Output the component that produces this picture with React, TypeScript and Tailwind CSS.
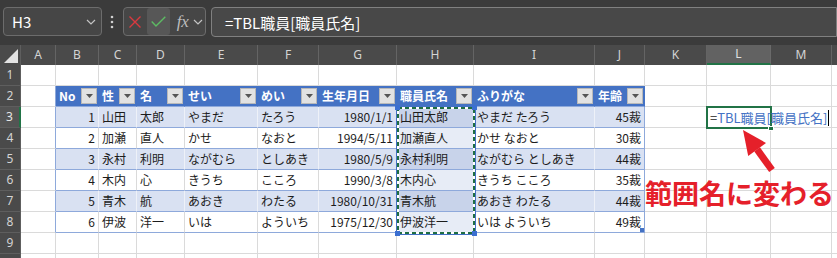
import React from "react";

const COLS = ["A", "B", "C", "D", "E", "F", "G", "H", "I", "J", "K", "L", "M", ""];
const HEAD = ["No", "性", "名", "せい", "めい", "生年月日", "職員氏名", "ふりがな", "年齢"];
const DATA = [
  ["1", "山田", "太郎", "やまだ", "たろう", "1980/1/1", "山田太郎", "やまだ たろう", "45裁"],
  ["2", "加瀬", "直人", "かせ", "なおと", "1994/5/11", "加瀬直人", "かせ なおと", "30裁"],
  ["3", "永村", "利明", "ながむら", "としあき", "1980/5/9", "永村利明", "ながむら としあき", "44裁"],
  ["4", "木内", "心", "きうち", "こころ", "1990/3/8", "木内心", "きうち こころ", "35裁"],
  ["5", "青木", "航", "あおき", "わたる", "1980/10/31", "青木航", "あおき わたる", "44裁"],
  ["6", "伊波", "洋一", "いは", "よういち", "1975/12/30", "伊波洋一", "いは よういち", "49裁"],
];
const RIGHT = [true, false, false, false, false, true, false, false, true];
const ROWS = [1, 2, 3, 4, 5, 6, 7, 8, 9, 10];

const Chevron = () => (
  <svg width="10" height="6" viewBox="0 0 10 6">
    <path d="M1 1l4 4 4-4" fill="none" stroke="#c4c4c4" strokeWidth="1.2" />
  </svg>
);

const FilterBtn = () => (
  <div className="w-[16px] h-[16px] shrink-0 bg-[#e2e2e2] border border-[#b9b9b9] flex items-center justify-center">
    <svg width="7" height="4" viewBox="0 0 7 4">
      <path d="M0 0h7L3.5 4z" fill="#555" />
    </svg>
  </div>
);

function gridCell(r: number, ci: number) {
  const inTable = ci >= 1 && ci <= 9 && r >= 2 && r <= 8;
  if (!inTable) {
    const edge = ci === 0 && r >= 2 && r <= 8;
    return (
      <div
        key={`${r}-${ci}`}
        className={
          edge
            ? "border-r border-b border-r-[#8ea9db] border-b-[#dadada]"
            : "border-r border-b border-[#dadada]"
        }
      />
    );
  }

  const k = ci - 1;
  if (r === 2) {
    return (
      <div
        key={`${r}-${ci}`}
        className="bg-[#4472c4] border-r border-b border-r-[#4472c4] border-b-[#8ea9db] flex items-center justify-between pl-[3px] pr-[1px]"
      >
        <span className="text-[12px] font-bold text-white leading-none whitespace-nowrap">{HEAD[k]}</span>
        <FilterBtn />
      </div>
    );
  }

  const banded = r % 2 === 1;
  const isH = ci === 7;
  let bg = banded ? "bg-[#d9e1f2]" : "bg-white";
  if (isH) bg = banded ? "bg-[#c8d3ea]" : "bg-[#e7ecf6]";
  const rightColor =
    ci === 9 ? "border-r-[#8ea9db]" : banded ? "border-r-[#eef1f8]" : "border-r-[#dadada]";
  const align = RIGHT[k] ? "justify-end pr-[3px]" : "justify-start pl-[3px]";

  return (
    <div
      key={`${r}-${ci}`}
      className={`${bg} border-r border-b ${rightColor} border-b-[#8ea9db] flex items-center ${align} text-[12px] leading-none text-[#1c1c1c] whitespace-nowrap`}
    >
      {DATA[r - 3][k]}
    </div>
  );
}

export default function App() {
  return (
    <div className="relative w-[837px] h-[258px] overflow-hidden bg-white font-['Noto_Sans_CJK_JP','Noto_Sans',sans-serif]">
      {/* formula bar */}
      <div className="h-[45px] bg-[#3b3b3b] flex items-start pt-[7px] pl-[3px]">
        <div className="w-[101px] h-[29px] rounded-[4px] border border-[#6c6c6c] bg-[#464646] flex items-center justify-between pl-[8px] pr-[5px]">
          <span className="text-[15px] text-white leading-none">H3</span>
          <Chevron />
        </div>
        <div className="w-[21px] h-[29px] flex items-center justify-center">
          <svg width="4" height="14" viewBox="0 0 4 14">
            <circle cx="2" cy="2" r="1.3" fill="#d0d0d0" />
            <circle cx="2" cy="7" r="1.3" fill="#d0d0d0" />
            <circle cx="2" cy="12" r="1.3" fill="#d0d0d0" />
          </svg>
        </div>
        <div className="w-[85px] h-[29px] rounded-[4px] border border-[#6c6c6c] bg-[#464646] flex items-center pl-[5px]">
          <svg width="12" height="12" viewBox="0 0 12 12">
            <path d="M0.5 0.5l11 11M11.5 0.5l-11 11" stroke="#d9393f" strokeWidth="1.4" />
          </svg>
          <div className="ml-[6px] w-[23px] h-[27px] rounded-[3px] bg-[#575757] flex items-center justify-center">
            <svg width="15" height="11" viewBox="0 0 15 11">
              <path d="M0.7 5.5l4.3 4.5L14.3 0.7" fill="none" stroke="#5dbb63" strokeWidth="1.4" />
            </svg>
          </div>
          <span className="ml-[7px] text-[17px] italic text-[#bdbdbd] leading-none font-['Liberation_Serif',serif]">
            fx
          </span>
          <span className="ml-[4px] flex">
            <Chevron />
          </span>
        </div>
        <div className="ml-[5px] w-[640px] h-[30px] rounded-l-[4px] border border-[#808080] bg-[#484848] flex items-center pl-[13px]">
          <span className="text-[15px] text-white leading-none whitespace-nowrap">=TBL職員[職員氏名]</span>
        </div>
      </div>

      {/* sheet grid */}
      <div className="grid grid-cols-[21px_35px_43px_38px_48px_73px_61px_78px_77px_121px_50px_62px_64px_61px_20px] grid-rows-[20px_repeat(10,21px)] w-[852px]">
        <div className="bg-[#4a4a4a] border-r border-[#5e5e5e] flex items-end justify-end p-[2px]">
          <svg width="14" height="14" viewBox="0 0 14 14">
            <path d="M14 0V14H0z" fill="#e2e2e2" />
          </svg>
        </div>
        {COLS.map((c) => (
          <div
            key={`h-${c}`}
            className={
              c === "L"
                ? "bg-[#626262] border-r border-[#6a6a6a] border-b-2 border-b-[#217346] flex items-center justify-center text-[12px] text-[#e0e0e0] font-['Noto_Sans',sans-serif]"
                : "bg-[#4a4a4a] border-r border-[#646464] flex items-center justify-center text-[12px] text-[#d4d4d4] font-['Noto_Sans',sans-serif]"
            }
          >
            {c}
          </div>
        ))}
        {ROWS.map((r) => (
          <React.Fragment key={`r-${r}`}>
            <div
              className={
                r === 3
                  ? "bg-[#545454] border-b border-b-[#5e5e5e] border-r-2 border-r-[#217346] flex items-center justify-center text-[12px] text-[#e6e6e6] font-['Noto_Sans',sans-serif]"
                  : "bg-[#4a4a4a] border-b border-r border-[#5e5e5e] flex items-center justify-center text-[12px] text-[#d4d4d4] font-['Noto_Sans',sans-serif]"
              }
            >
              {r < 10 ? r : ""}
            </div>
            {COLS.map((_, ci) => gridCell(r, ci))}
          </React.Fragment>
        ))}
      </div>

      {/* H3:H8 reference marquee */}
      <svg className="absolute left-[395px] top-[105px] pointer-events-none" width="82" height="131" viewBox="0 0 82 131">
        <rect x="1.5" y="1.5" width="79" height="128" fill="none" stroke="#4472c4" strokeWidth="1" />
        <rect x="3" y="3" width="76" height="125" fill="none" stroke="#ffffff" strokeWidth="2" />
        <rect x="3" y="3" width="76" height="125" fill="none" stroke="#1f6e43" strokeWidth="2" strokeDasharray="4 3" />
        <rect x="0" y="0" width="5" height="5" fill="#3b6fd1" />
        <rect x="77" y="0" width="5" height="5" fill="#3b6fd1" />
        <rect x="0" y="126" width="5" height="5" fill="#3b6fd1" />
        <rect x="77" y="126" width="5" height="5" fill="#3b6fd1" />
      </svg>

      {/* table resize handle */}
      <div className="absolute left-[640px] top-[228px] w-[4px] h-[4px] bg-[#4472c4]" />

      {/* L3 editing cell */}
      <div className="absolute left-[706px] top-[106px] w-[66px] h-[23px] border-2 border-[#217346]" />
      <div className="absolute left-[768px] top-[126px] w-[6px] h-[5px] bg-[#217346] border border-white" />
      <div className="absolute left-[710px] top-[109px] h-[17px] flex items-center text-[13px] leading-none whitespace-nowrap">
        <span className="text-[#1c1c1c]">=</span>
        <span className="text-[#4472c4]">TBL職員[職員氏名]</span>
        <span className="ml-[1px] w-[1px] h-[16px] bg-black" />
      </div>

      {/* red callout */}
      <svg className="absolute left-[735px] top-[124px] pointer-events-none" width="45" height="50" viewBox="0 0 45 50">
        <path d="M8 6L31 19L13.2 31.9Z" fill="#e5202a" />
        <path d="M24.9 23.3L19.3 27.5L34.2 48.1L39.8 43.9Z" fill="#e5202a" />
      </svg>
      <div className="absolute left-[645px] top-[179px] text-[27px] font-bold leading-none text-[#e5202a] whitespace-nowrap">
        範囲名に変わる
      </div>
    </div>
  );
}
